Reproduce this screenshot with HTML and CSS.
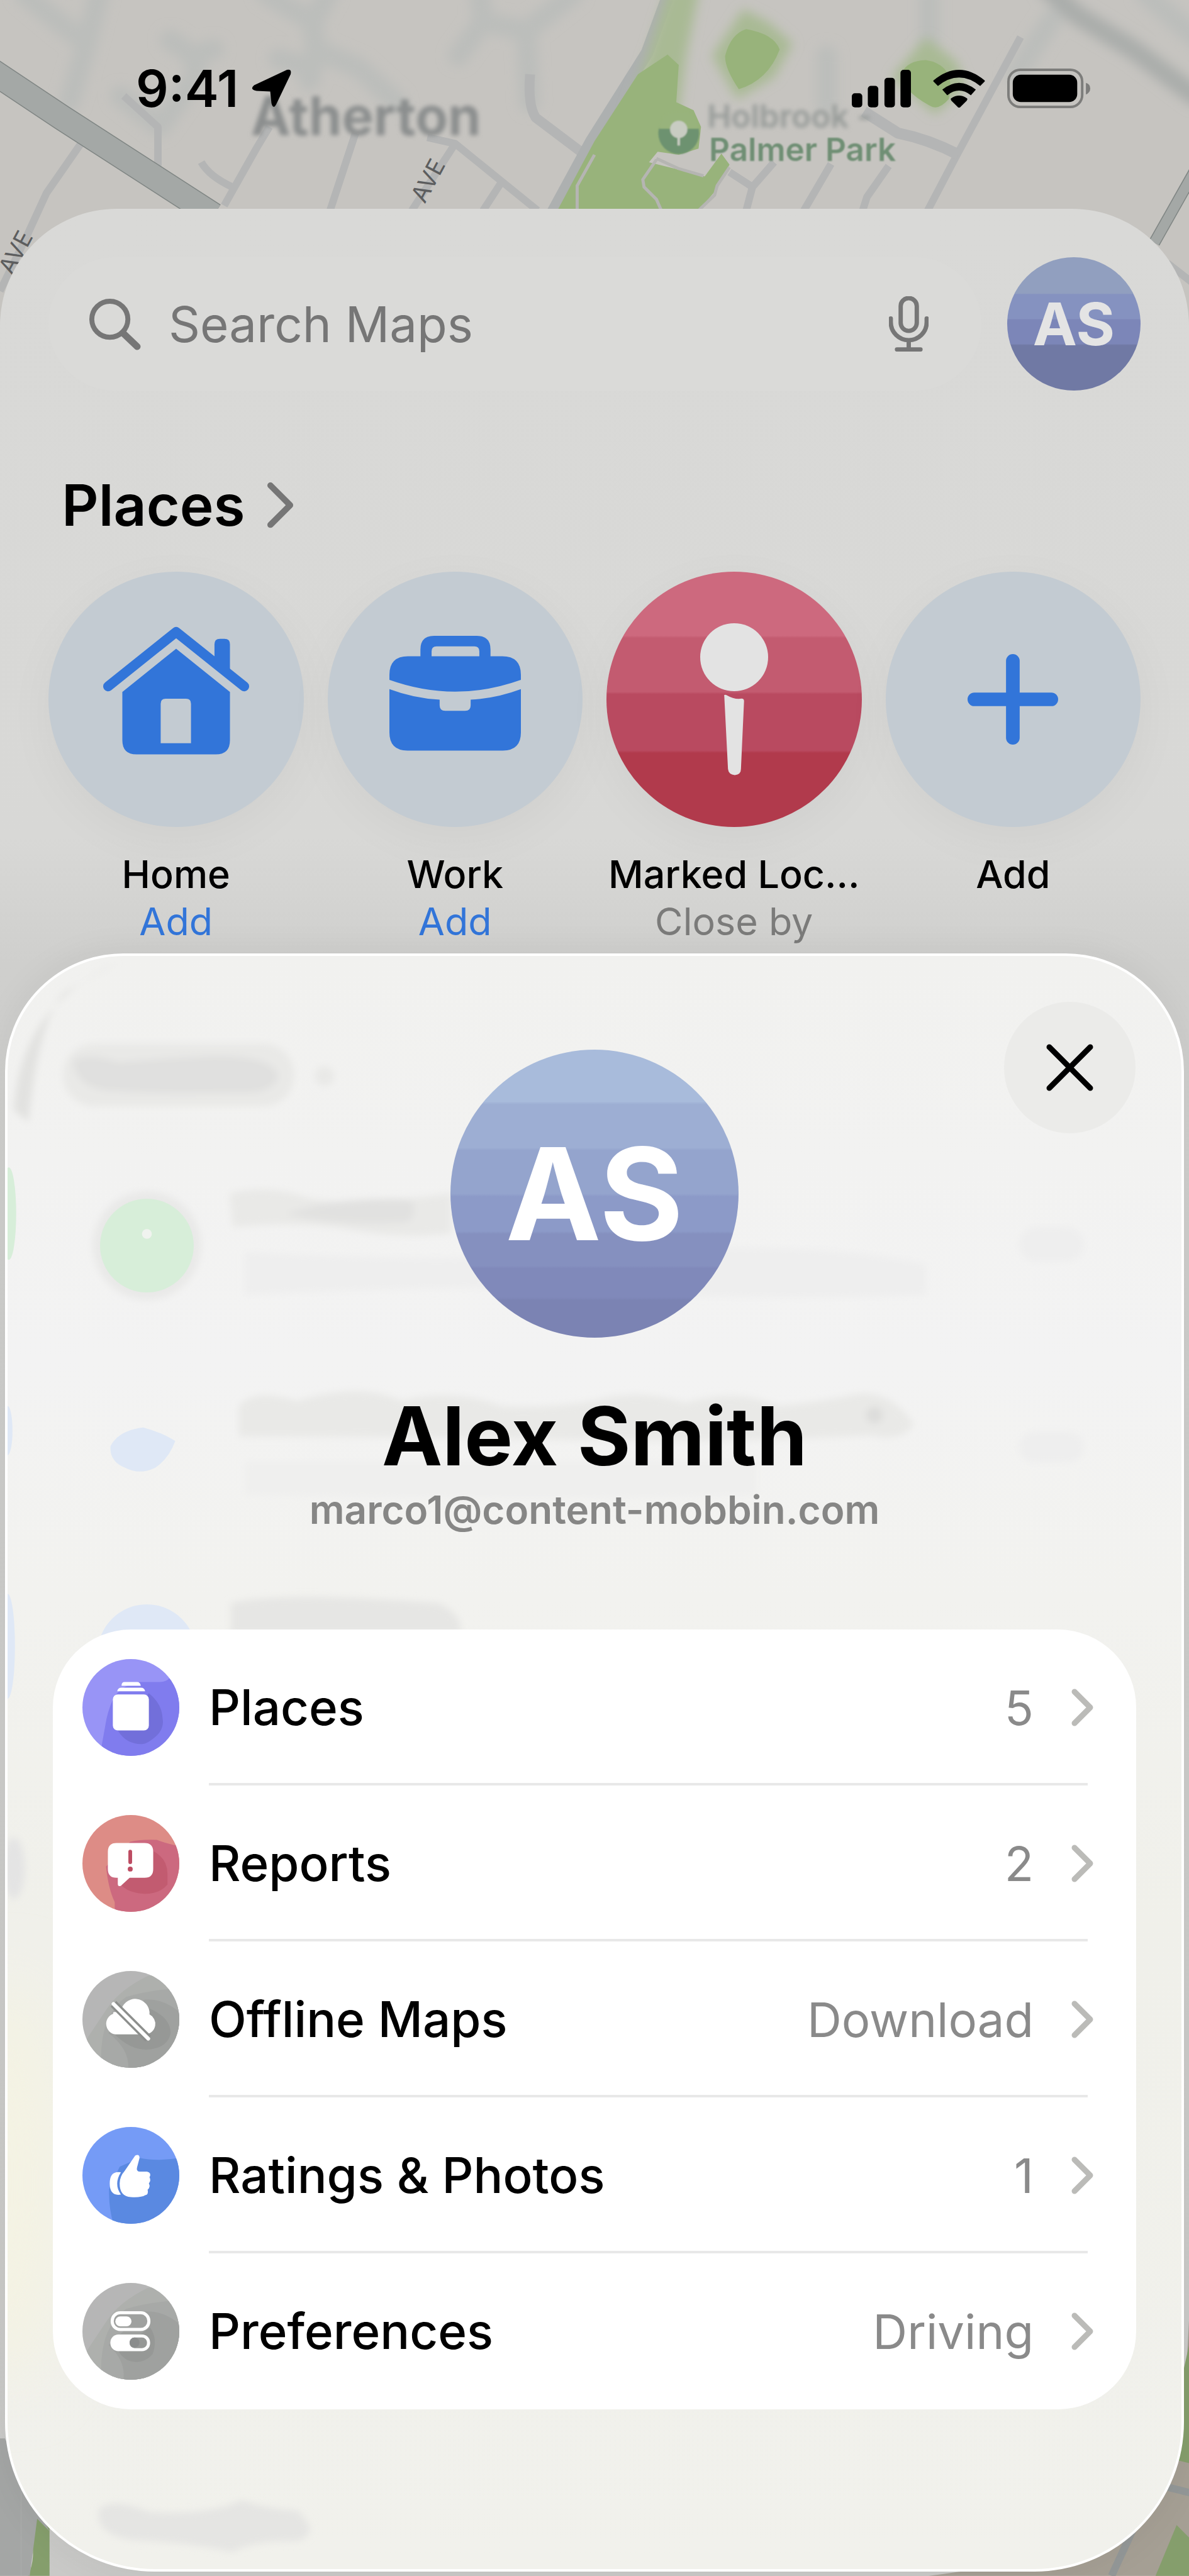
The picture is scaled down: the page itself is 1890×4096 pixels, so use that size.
FILE: index.html
```html
<!DOCTYPE html>
<html lang="en">
<head>
    <meta charset="utf-8">
    <meta content="width=device-width,initial-scale=1.0" name="viewport">
    <title>Maps</title>
    <link rel="stylesheet" href="styles.css">
</head>
<body>
<!-- map -->
<svg class="map" viewBox="0 0 1920 700" aria-hidden="true">
    <defs>
        <filter id="soft" x="-20%" y="-20%" width="140%" height="140%"><feGaussianBlur stdDeviation="9"/></filter>
        <filter id="soft-text" x="-10%" y="-20%" width="120%" height="140%"><feGaussianBlur stdDeviation="4"/></filter>
        <filter id="soft-label" x="-10%" y="-20%" width="120%" height="140%"><feGaussianBlur stdDeviation="1"/></filter>
    </defs>
    <rect width="1920" height="700" fill="#c6c4c0"/>
    <g filter="url(#soft)" fill="none" stroke="#bcbebb" stroke-width="34" stroke-linecap="round" stroke-linejoin="round">
        <path d="M40-10 100 40 140 70 160-10M140 70 112 165M275 65 312 90 345 80M312 90 318 120 258 205 195 155"/>
        <path d="M430-10 505 35 510 80 500 130M505 35 530-10M510 80 580 110 640 165M450 95 500 110"/>
        <path d="M775-10 780 35 740 90M780 35 850 50 925-10M850 50 855 165"/>
        <path d="M1500-10V70M1700 30 1640 120M1850-10 1930 60M1335 90V170"/>
        <path d="M1690-20 1740 25 1830 80 1930 155" stroke="#aaadab" stroke-width="32"/>
    </g>
    <g fill="none" stroke="#b4b5b5" stroke-width="12" stroke-linejoin="round">
        <path d="M132 230 75 312 42 384 0 470M255 268V205L200 155M362 332 415 238 435 205M325 262Q338 285 375 302M533 340 574 215"/>
        <path d="M665 340 735 232 690 222M735 232 868 340M780 340 808 297"/>
        <path d="M938 245 865 190Q852 170 856 120" stroke-width="16"/>
        <path d="M1178 278 1215 302 1250 262M1215 302 1205 340M1298 340 1342 265M1393 340 1400 318 1435 268M1498 340 1548 245 1648 60"/>
        <path d="M1548 250Q1500 225 1450 215L1395 180" stroke-width="18"/>
        <path d="M1885 425 1930 460"/>
    </g>
    <path d="M-20 110 100 190 345 348" fill="none" stroke="#7f8583" stroke-width="42"/>
    <path d="M-20 110 100 190 345 348" fill="none" stroke="#a4a8a6" stroke-width="39"/>
    <path d="M1864 392 1930 275" fill="none" stroke="#7f8583" stroke-width="19"/>
    <path d="M1864 392 1930 275" fill="none" stroke="#a4a8a6" stroke-width="16"/>
    <path d="M893 342 955 228 1045 85 1080-10" fill="none" stroke="#adb0b0" stroke-width="20"/>
    <!-- parks -->
    <path filter="url(#soft)" fill="#a9ba94" d="M1080-20H1130L1108 90 1095 190 1010 190 1045 90zM1200 15 1240 35 1280 70 1250 125 1190 160 1150 90zM1495 60 1545 100 1560 140 1510 185 1440 125z"/>
    <path fill="#98b37b" d="M1078 88 1096 105 1092 165 1120 178 1132 205 1128 240 1096 250 1062 245 1048 262 1100 275 1138 285 1165 248 1178 266 1158 305 1128 340H900L960 228 1030 120z"/>
    <path fill="#98b37b" d="M1205 47Q1250 55 1259 80 1240 130 1193 144 1170 110 1171 90 1180 55 1205 47zM1495 97Q1545 105 1532 160 1515 180 1500 170 1455 145 1456 118 1465 98 1495 97z"/>
    <path d="M1060 258 1038 290 1040 302 1060 322 1068 340M1178 270 1158 300 1154 315 1128 340M1060 256 1095 272 1136 284M960 250 932 300V340" fill="none" stroke="#b5b5b2" stroke-width="5"/>
    <g filter="url(#soft-label)">
        <ellipse cx="1096" cy="215" rx="33" ry="34" fill="#6d926f"/>
        <path d="M1064 208Q1066 180 1096 180T1128 208z" fill="#98b37b"/>
        <circle cx="1096" cy="209" r="14" fill="#c8ccc2"/>
        <path d="M1096 218V235" stroke="#c8ccc2" stroke-width="4"/>
    </g>
    <text class="map-town" x="405" y="218" filter="url(#soft-text)">Atherton</text>
    <text class="map-park map-park-far" x="1142" y="206" filter="url(#soft-text)">Holbrook -</text>
    <text class="map-park" x="1145" y="260" filter="url(#soft-label)">Palmer Park</text>
    <text class="map-road" transform="translate(686 330) rotate(-62)">AVE</text>
    <text class="map-road" transform="translate(20 446) rotate(-62)">AVE</text>
</svg>

<header class="status">
    <span class="status-time">9:41</span>
    <svg class="status-arrow" viewBox="0 0 64 63"><path d="M57 1Q65-1 63 8L40 56Q35 66 32 55L30 36 8 35Q-4 33 4 26z"/></svg>
    <div class="status-icons">
        <svg class="icon-signal" viewBox="0 0 96 61"><rect y="38" width="17" height="23" rx="5"/><rect x="26" y="26" width="17" height="35" rx="5"/><rect x="53" y="13" width="17" height="48" rx="5"/><rect x="79" width="17" height="61" rx="5"/></svg>
        <svg class="icon-wifi" viewBox="0 0 84 61"><path d="M1 17Q42-17 83 17Q84 18 83 19L76 26Q42-1 8 26L1 19Q0 18 1 17zM15 32Q42 10 69 32L61 41Q42 26 23 41zM29 46Q42 37 55 46Q56 48 54 50L43 61H41L30 50Q28 48 29 46z"/></svg>
        <svg class="icon-battery" viewBox="0 0 135 64"><rect x="2" y="2" width="119" height="60" rx="19" fill="none" stroke="#7d7d7b" stroke-width="4"/><rect x="9" y="10" width="104" height="44" rx="13"/><path d="M127 23Q134 25 134 32T127 42z" fill="#7d7d7b"/></svg>
    </div>
</header>

<main class="sheet">
    <div class="search-row">
        <div class="search-box">
            <svg class="icon-search" viewBox="0 0 84 84"><circle cx="34" cy="34" r="29"/><path d="M55 56 78 78" stroke-width="11"/></svg>
            <input class="search-input" type="text" placeholder="Search Maps" aria-label="Search Maps">
            <button class="mic" type="button" aria-label="Dictate">
                <svg class="icon-mic" viewBox="0 0 64 90"><rect x="19" y="3" width="26" height="53" rx="13"/><path d="M3 36V42A29 29 0 0 0 61 42V36M32 72V86M13 86H51"/></svg>
            </button>
        </div>
        <button class="avatar" type="button">AS</button>
    </div>

    <h2 class="places-title">Places
        <svg class="places-chevron" viewBox="0 0 46 76"><path d="M6 6 38 38 6 70"/></svg>
    </h2>

    <div class="places">
        <a class="place" href="#">
            <span class="place-circle">
                <svg class="icon-home" viewBox="0 0 236 235">
                    <path d="M8 97 118 9 228 97" fill="none" stroke="#3275d9" stroke-width="16" stroke-linecap="round" stroke-linejoin="round"/>
                    <path d="M180 55V29Q180 20 189 20H196Q205 20 205 29V80z"/>
                    <path fill-rule="evenodd" d="M118 36 205 106V184Q205 207 182 207H54Q31 207 31 184V106zM101 117Q93 117 93 125V189H142V125Q142 117 134 117z"/>
                </svg>
            </span>
            <span class="place-name">Home</span>
            <span class="place-note place-note-link">Add</span>
        </a>
        <a class="place" href="#">
            <span class="place-circle">
                <svg class="icon-work" viewBox="0 0 212 204">
                    <path d="M50 33V22Q50 0 72 0H141Q163 0 163 22V33H182Q212 33 212 63V71Q106 109 0 71V63Q0 33 30 33zM68 33H145V25Q145 17 137 17H76Q68 17 68 25z" fill-rule="evenodd"/>
                    <path d="M0 86Q40 101 81 103V112Q81 121 90 121H122Q131 121 131 112V103Q172 101 212 86V156Q212 185 183 185H29Q0 185 0 156z"/>
                </svg>
            </span>
            <span class="place-name">Work</span>
            <span class="place-note place-note-link">Add</span>
        </a>
        <a class="place" href="#">
            <span class="place-circle place-circle-red">
                <svg class="icon-pin" viewBox="0 0 110 246"><circle cx="55" cy="55" r="55"/><path d="M39 118Q38 115 42 116 56 124 67 122 71 122 71 126L66 236Q66 245 56 246 46 245 45 236z"/></svg>
            </span>
            <span class="place-name">Marked Loc…</span>
            <span class="place-note">Close by</span>
        </a>
        <a class="place" href="#">
            <span class="place-circle">
                <svg class="icon-plus" viewBox="0 0 146 146"><path d="M73 11V135M11 73H135" stroke="#3275d9" stroke-width="22" stroke-linecap="round"/></svg>
            </span>
            <span class="place-name">Add</span>
        </a>
    </div>

    <!-- account card -->
    <section class="profile">
        <svg class="haze" viewBox="0 0 1904 2612" aria-hidden="true">
            <defs>
                <filter id="haze" x="-20%" y="-50%" width="140%" height="200%"><feGaussianBlur stdDeviation="6"/></filter>
                <filter id="wash" x="-50%" y="-50%" width="200%" height="200%"><feGaussianBlur stdDeviation="50"/></filter>
            </defs>
            <ellipse cx="0" cy="1990" rx="90" ry="330" fill="#f4f3e3" filter="url(#wash)"/>
            <g filter="url(#haze)">
                <path d="M10 250Q20 80 180 10L90 60Q50 110 34 270z" fill="#e2e2e0"/>
                <rect x="90" y="142" width="375" height="102" rx="50" fill="#e9e9e7"/>
                <path d="M106 170Q130 155 180 172 260 165 330 162 430 160 440 195 430 225 380 222 250 225 180 220 110 220 106 170z" fill="#e0e0df"/>
                <circle cx="514" cy="195" r="16" fill="#e9e9e7"/>
                <circle cx="226" cy="470" r="88" fill="#e9e9e8"/>
                <path d="M360 385Q420 370 480 390T720 385V450Q640 460 560 445T365 440z" fill="#e9e9e7"/>
                <path d="M450 418Q540 390 650 395 670 410 650 432 540 440 450 418z" fill="#e1e1e0"/>
                <path d="M385 480Q700 500 1000 480T1490 500V550Q1200 560 1000 545T385 550z" fill="#eeeeee"/>
                <path d="M375 730Q400 700 470 722 570 690 640 722 720 700 800 730 870 735 950 722 1020 700 1100 725 1180 700 1250 730 1310 725 1370 712 1430 700 1470 760 1450 790 1400 778 1200 790 900 785T375 780z" fill="#e9e9e7"/>
                <circle cx="1406" cy="745" r="14" fill="#dddddb"/>
                <path d="M385 820H1215V875Q900 885 385 875z" fill="#efefee"/>
                <path d="M362 1050Q440 1030 700 1050 740 1070 735 1100H362z" fill="#e6e6e4"/>
                <rect x="1640" y="440" width="106" height="56" rx="28" fill="#eeeeee"/>
                <rect x="1640" y="772" width="106" height="50" rx="25" fill="#eeeeee"/>
                <path d="M148 2520Q170 2500 230 2525 330 2530 380 2505 420 2520 470 2522 510 2560 470 2572 400 2570 365 2590 300 2575 200 2570 140 2560 148 2520z" fill="#e5e5e3"/>
                <ellipse cx="10" cy="1480" rx="18" ry="50" fill="#e4e4e4"/>
            </g>
            <circle cx="226" cy="470" r="76" fill="#d7eed9"/>
            <circle cx="226" cy="451" r="8" fill="#f0f3ef"/>
            <path d="M167 795Q180 770 220 765 250 773 272 787 262 815 240 830 215 843 190 830 165 820 167 795z" fill="#dfe8f6"/>
            <circle cx="226" cy="1132" r="80" fill="#dfe8f6"/>
            <ellipse cx="2" cy="418" rx="12" ry="75" fill="#d7eed9"/>
            <ellipse cx="0" cy="770" rx="8" ry="40" fill="#dfe8f6"/>
            <ellipse cx="0" cy="1120" rx="12" ry="85" fill="#dfe8f6"/>
        </svg>

        <button class="close" type="button" aria-label="Close">
            <svg class="icon-close" viewBox="0 0 76 76"><path d="M5 5 71 71M71 5 5 71"/></svg>
        </button>

        <div class="avatar avatar-large">AS</div>
        <h1 class="profile-name">Alex Smith</h1>
        <p class="profile-email">marco1@content-mobbin.com</p>

        <ul class="menu">
            <li class="menu-item"><a class="menu-link" href="#">
                <svg class="menu-icon" viewBox="0 0 156 156">
                    <rect width="156" height="156" fill="#9894f6"/>
                    <path d="M156 22 140 31Q135 37 123 37H93Q65 40 50 63 40 85 37 106L30 145V156H156z" fill="#807cee"/>
                    <path d="M107 55Q128 72 129 95 132 110 121 122 105 137 95 137 70 137 57 115z" fill="#726fda"/>
                    <path d="M63 43Q63 37 68 37H88Q93 37 94 43zM56 52Q57 46 63 46H94Q100 46 101 52z" fill="#fff"/>
                    <rect x="49" y="57" width="58" height="58" rx="8" fill="#fff"/>
                </svg>
                <span class="menu-body"><span class="menu-label">Places</span><span class="menu-value">5</span>
                <svg class="menu-chevron" viewBox="0 0 36 60"><path d="M5 5 30 30 5 55"/></svg></span></a></li>
            <li class="menu-item"><a class="menu-link" href="#">
                <svg class="menu-icon" viewBox="0 0 156 156">
                    <rect width="156" height="156" fill="#dd8c86"/>
                    <path d="M156 50Q135 46 120 40 95 39 77 43L38 83Q42 120 52 140V156H156z" fill="#cc697f"/>
                    <path d="M114 58Q137 70 137 95V112Q125 127 100 127 72 125 62 112L76 95z" fill="#c25b70"/>
                    <path d="M55 45H100Q114 45 114 59V87Q114 101 100 101H76L62 114Q57 116 57 111V101H55Q41 101 41 87V59Q41 45 55 45z" fill="#fff"/>
                    <rect x="74" y="56" width="6" height="23" rx="3" fill="#bd4c62"/><circle cx="77" cy="87" r="4" fill="#bd4c62"/>
                </svg>
                <span class="menu-body"><span class="menu-label">Reports</span><span class="menu-value">2</span>
                <svg class="menu-chevron" viewBox="0 0 36 60"><path d="M5 5 30 30 5 55"/></svg></span></a></li>
            <li class="menu-item"><a class="menu-link" href="#">
                <svg class="menu-icon" viewBox="0 0 156 156">
                    <rect width="156" height="156" fill="#b6b6b6"/>
                    <path d="M156 0 105 8Q60 30 40 60 20 90 0 120V156H156z" fill="#aeb0ad"/>
                    <path d="M156 28Q110 30 70 42 30 70 30 140V156H156z" fill="#a7a9a7"/>
                    <path d="M156 66Q130 44 100 46L42 100Q75 125 74 156H156z" fill="#9fa19f"/>
                    <path d="M107 60Q142 75 142 100 138 122 110 126 80 130 52 102z" fill="#969896"/>
                    <path d="M53 102A17 17 0 0 1 50 69Q48 66 52 66H62A23 23 0 0 1 108 70A17 17 0 0 1 103 102z" fill="#fff"/>
                    <path d="M50 53 106 109" stroke="#8d8f8d" stroke-width="13"/>
                    <path d="M50 53 106 109" stroke="#fff" stroke-width="6" stroke-linecap="round"/>
                </svg>
                <span class="menu-body"><span class="menu-label">Offline Maps</span><span class="menu-value">Download</span>
                <svg class="menu-chevron" viewBox="0 0 36 60"><path d="M5 5 30 30 5 55"/></svg></span></a></li>
            <li class="menu-item"><a class="menu-link" href="#">
                <svg class="menu-icon" viewBox="0 0 156 156">
                    <rect width="156" height="156" fill="#759bf6"/>
                    <path d="M156 50Q120 56 92 50L60 64 43 100Q42 130 50 156H156z" fill="#5a89e1"/>
                    <path d="M62 73Q44 70 44 91T62 109Q50 92 62 73z" fill="#fff"/>
                    <path d="M85 46Q92 43 92 50L88 65Q86 72 93 72H104Q112 74 108 81 111 86 107 91 110 97 105 101 107 109 101 110 95 114 78 113 60 112 60 91 60 80 68 71z" fill="#fff"/>
                </svg>
                <span class="menu-body"><span class="menu-label">Ratings &amp; Photos</span><span class="menu-value">1</span>
                <svg class="menu-chevron" viewBox="0 0 36 60"><path d="M5 5 30 30 5 55"/></svg></span></a></li>
            <li class="menu-item"><a class="menu-link" href="#">
                <svg class="menu-icon" viewBox="0 0 156 156">
                    <rect width="156" height="156" fill="#b6b6b6"/>
                    <path d="M156 0 105 8Q60 30 40 60 20 90 0 120V156H156z" fill="#aeb0ad"/>
                    <path d="M156 28Q110 30 70 42 30 70 30 140V156H156z" fill="#a7a9a7"/>
                    <path d="M156 66Q130 44 100 46L42 100Q70 125 66 156H156z" fill="#9fa19f"/>
                    <path d="M109 72Q122 90 113 115 95 134 72 124 60 117 58 108z" fill="#969896"/>
                    <rect x="48" y="48" width="59" height="27" rx="13" fill="#9fa19f" stroke="#fff" stroke-width="5"/>
                    <rect x="53" y="54" width="26" height="16" rx="8" fill="#fff"/>
                    <rect x="45" y="83" width="64" height="27" rx="13" fill="#fff"/>
                    <rect x="76" y="88" width="28" height="17" rx="8" fill="#969896"/>
                    <circle cx="84" cy="96" r="8" fill="#8a8c8c"/>
                </svg>
                <span class="menu-body"><span class="menu-label">Preferences</span><span class="menu-value">Driving</span>
                <svg class="menu-chevron" viewBox="0 0 36 60"><path d="M5 5 30 30 5 55"/></svg></span></a></li>
        </ul>
    </section>

    <!-- map showing round the bottom corners -->
    <svg class="map-foot" viewBox="0 0 1920 662" aria-hidden="true">
        <path d="M0 440H8L34 500V662H0z" fill="#a4a6a5"/>
        <path d="M80 560V662H45Q60 630 48 600L60 560z" fill="#859e6c"/>
        <path d="M34 500 80 590 60 570 48 662H34z" fill="#a4a6a5"/>
        <path d="M1920 250V662H1500Q1700 640 1800 560L1912 400z" fill="#a59f94"/>
        <path d="M1920 290V480L1880 470 1850 440 1900 380zM1900 580 1920 600V662H1866z" fill="#859e6c"/>
        <path d="M1850 510 1930 530M1870 500 1795 662" stroke="#939797" stroke-width="12"/>
    </svg>
</main>
</body>
</html>
```

FILE: styles.css
```css
body,h1,h2,p,ul{margin: 0;}
ul{
	padding: 0;
	list-style: none;
}
body{
	position: relative;
	background: #c6c4c0;
	color: #000;
	font-family: Inter, "Liberation Sans", sans-serif;
}
a{
	color: inherit;
	text-decoration: none;
}
button{
	padding: 0;
	border: none;
	font-family: inherit;
	color: inherit;
}
svg{
	display: block;
	flex: none;
}

/* map */
.map{
	position: absolute;
	top: 0;
	left: 0;
	width: 100%;
	z-index: -1;
}
.map-town{
	font-size: 86px;
	font-weight: 700;
	fill: #8b8e8e;
}
.map-park{
	font-size: 52px;
	font-weight: 600;
	fill: #6f8f74;
}
.map-park-far{fill: #979b99;}
.map-road{
	font-size: 38px;
	fill: #5c5d5e;
}

/* status bar */
.status{
	display: flex;
	align-items: center;
	height: 80px;
	padding: 101px 156px 151px 216px;
}
.status-time{
	font-size: 81px;
	line-height: 80px;
	font-weight: 600;
}
.status-arrow{
	width: 63px;
	margin-left: 21px;
}
.status-icons{
	display: flex;
	align-items: center;
	gap: 35px;
	margin-left: auto;
}
.icon-signal{width: 94px;}
.icon-wifi{width: 83px;}
.icon-battery{width: 133px;}

/* search sheet */
.sheet{
	position: relative;
	padding: 77px 8px 7px;
	border-radius: 186px 186px 0 0;
	background: linear-gradient(#d9d9d7, #d8d8d6 1000px, #cfcfcd 1200px, #c9c9c7);
}
.search-row{
	display: flex;
	gap: 41px;
	margin: 0 69px;
}
.search-box{
	display: flex;
	flex: 1;
	min-width: 0;
	align-items: center;
	height: 212px;
	padding: 0 84px 0 64px;
	box-sizing: border-box;
	border-radius: 106px;
	background: #dadad8;
}
.icon-search{
	width: 83px;
	fill: none;
	stroke: #767676;
	stroke-width: 8;
	stroke-linecap: round;
}
.search-input{
	flex: 1;
	min-width: 0;
	height: 100px;
	padding: 0;
	margin-left: 44px;
	border: none;
	outline: none;
	background: transparent;
	font-family: inherit;
	font-size: 78px;
}
.search-input::placeholder{
	color: #767676;
	opacity: 1;
}
.mic{background: transparent;}
.icon-mic{
	width: 63px;
	fill: none;
	stroke: #767676;
	stroke-width: 7;
	stroke-linecap: round;
}
.avatar{
	display: flex;
	flex: none;
	align-items: center;
	justify-content: center;
	width: 212px;
	height: 212px;
	border-radius: 50%;
	background: linear-gradient(#919fbf 27%, #8592c0 28%, #8592c0 46%, #7c86b8 47%, #7c86b8 65%, #7079a4 66%);
	color: #e4e4e4;
	font-size: 94px;
	font-weight: 700;
}
.places-title{
	display: flex;
	align-items: center;
	gap: 34px;
	margin: 127px 69px 0 90px;
	font-size: 91px;
	line-height: 110px;
	font-weight: 600;
}
.places-chevron{
	width: 45px;
	fill: none;
	stroke: #767676;
	stroke-width: 10;
	stroke-linecap: round;
	stroke-linejoin: round;
}
.places{
	display: grid;
	grid-template-columns: repeat(4, minmax(0, 1fr));
	gap: 38px;
	margin: 51px 69px 13px;
}
.place{
	display: flex;
	flex-direction: column;
	align-items: center;
	font-size: 61px;
	line-height: 75px;
	white-space: nowrap;
}
.place-circle{
	display: flex;
	align-items: center;
	justify-content: center;
	width: 100%;
	aspect-ratio: 1;
	margin-bottom: 38px;
	border-radius: 50%;
	background: #c3cbd2;
	box-shadow: 0 20px 80px rgba(0,0,0,.04);
	fill: #3275d9;
}
.place-circle-red{
	background: linear-gradient(#cd697e 25%, #c35b70 26%, #c35b70 47%, #b94a60 48%, #b94a60 70%, #b13a4c 71%);
	fill: #e3e3e3;
}
.icon-home{width: 232px;}
.icon-work{width: 209px;}
.icon-pin{width: 108px;}
.icon-plus{width: 144px;}
.place-name{font-weight: 500;}
.place-note{color: #7b7b7a;}
.place-note-link{color: #3275d9;}

/* account card */
.profile{
	position: relative;
	z-index: 1;
	display: flex;
	flex-direction: column;
	align-items: center;
	padding: 149px 72px 254px;
	border: 4px solid #fff;
	border-radius: 188px 188px 238px 238px;
	overflow: hidden;
	background: linear-gradient(#f1f1ef, #f3f3f3 25%, #f2f2ef 40%, #f0f0ea 60%, #f1f1ec);
	box-shadow: 0 0 60px rgba(0,0,0,.06);
}
.haze{
	position: absolute;
	top: 0;
	left: 0;
	width: 100%;
	z-index: -1;
}
.close{
	position: absolute;
	top: 73px;
	right: 73px;
	display: flex;
	align-items: center;
	justify-content: center;
	width: 209px;
	height: 209px;
	border-radius: 50%;
	background: #ebebe9;
}
.icon-close{
	width: 75px;
	stroke: #000;
	stroke-width: 9;
	stroke-linecap: round;
}
.avatar-large{
	width: 458px;
	height: 458px;
	background: linear-gradient(#a8bbdb 18%, #9daed3 19%, #9daed3 34%, #94a4cd 35%, #94a4cd 50%, #8c9ac8 51%, #8c9ac8 63%, #8590bf 64%, #8590bf 75%, #8089ba 76%, #8089ba 86%, #7b83b3 87%);
	color: #fff;
	font-size: 204px;
}
.profile-name{
	margin-top: 78px;
	font-size: 129px;
	line-height: 156px;
	font-weight: 700;
}
.profile-email{
	margin-top: 2px;
	color: #868685;
	font-size: 62px;
	line-height: 75px;
	font-weight: 600;
}
.menu{
	align-self: stretch;
	margin-top: 153px;
	border-radius: 124px;
	background: #fff;
}
.menu-link{
	display: flex;
	align-items: center;
	gap: 47px;
	height: 248px;
	padding: 0 77px 0 47px;
	font-size: 78px;
}
.menu-icon{
	width: 154px;
	border-radius: 50%;
}
.menu-body{
	display: flex;
	flex: 1;
	align-items: center;
	height: 100%;
	box-sizing: border-box;
	border-top: 4px solid transparent;
	border-bottom: 4px solid #e8e8e8;
}
.menu-item:last-child .menu-body{border-bottom-color: transparent;}
.menu-label{font-weight: 500;}
.menu-value{
	margin-left: auto;
	color: #8a8a8a;
	font-size: 76px;
}
.menu-chevron{
	width: 36px;
	margin: 0 -10px 0 60px;
	fill: none;
	stroke: #bbbbb8;
	stroke-width: 9;
	stroke-linecap: round;
	stroke-linejoin: round;
}
.map-foot{
	position: absolute;
	left: 0;
	bottom: 0;
	width: 100%;
}
```
